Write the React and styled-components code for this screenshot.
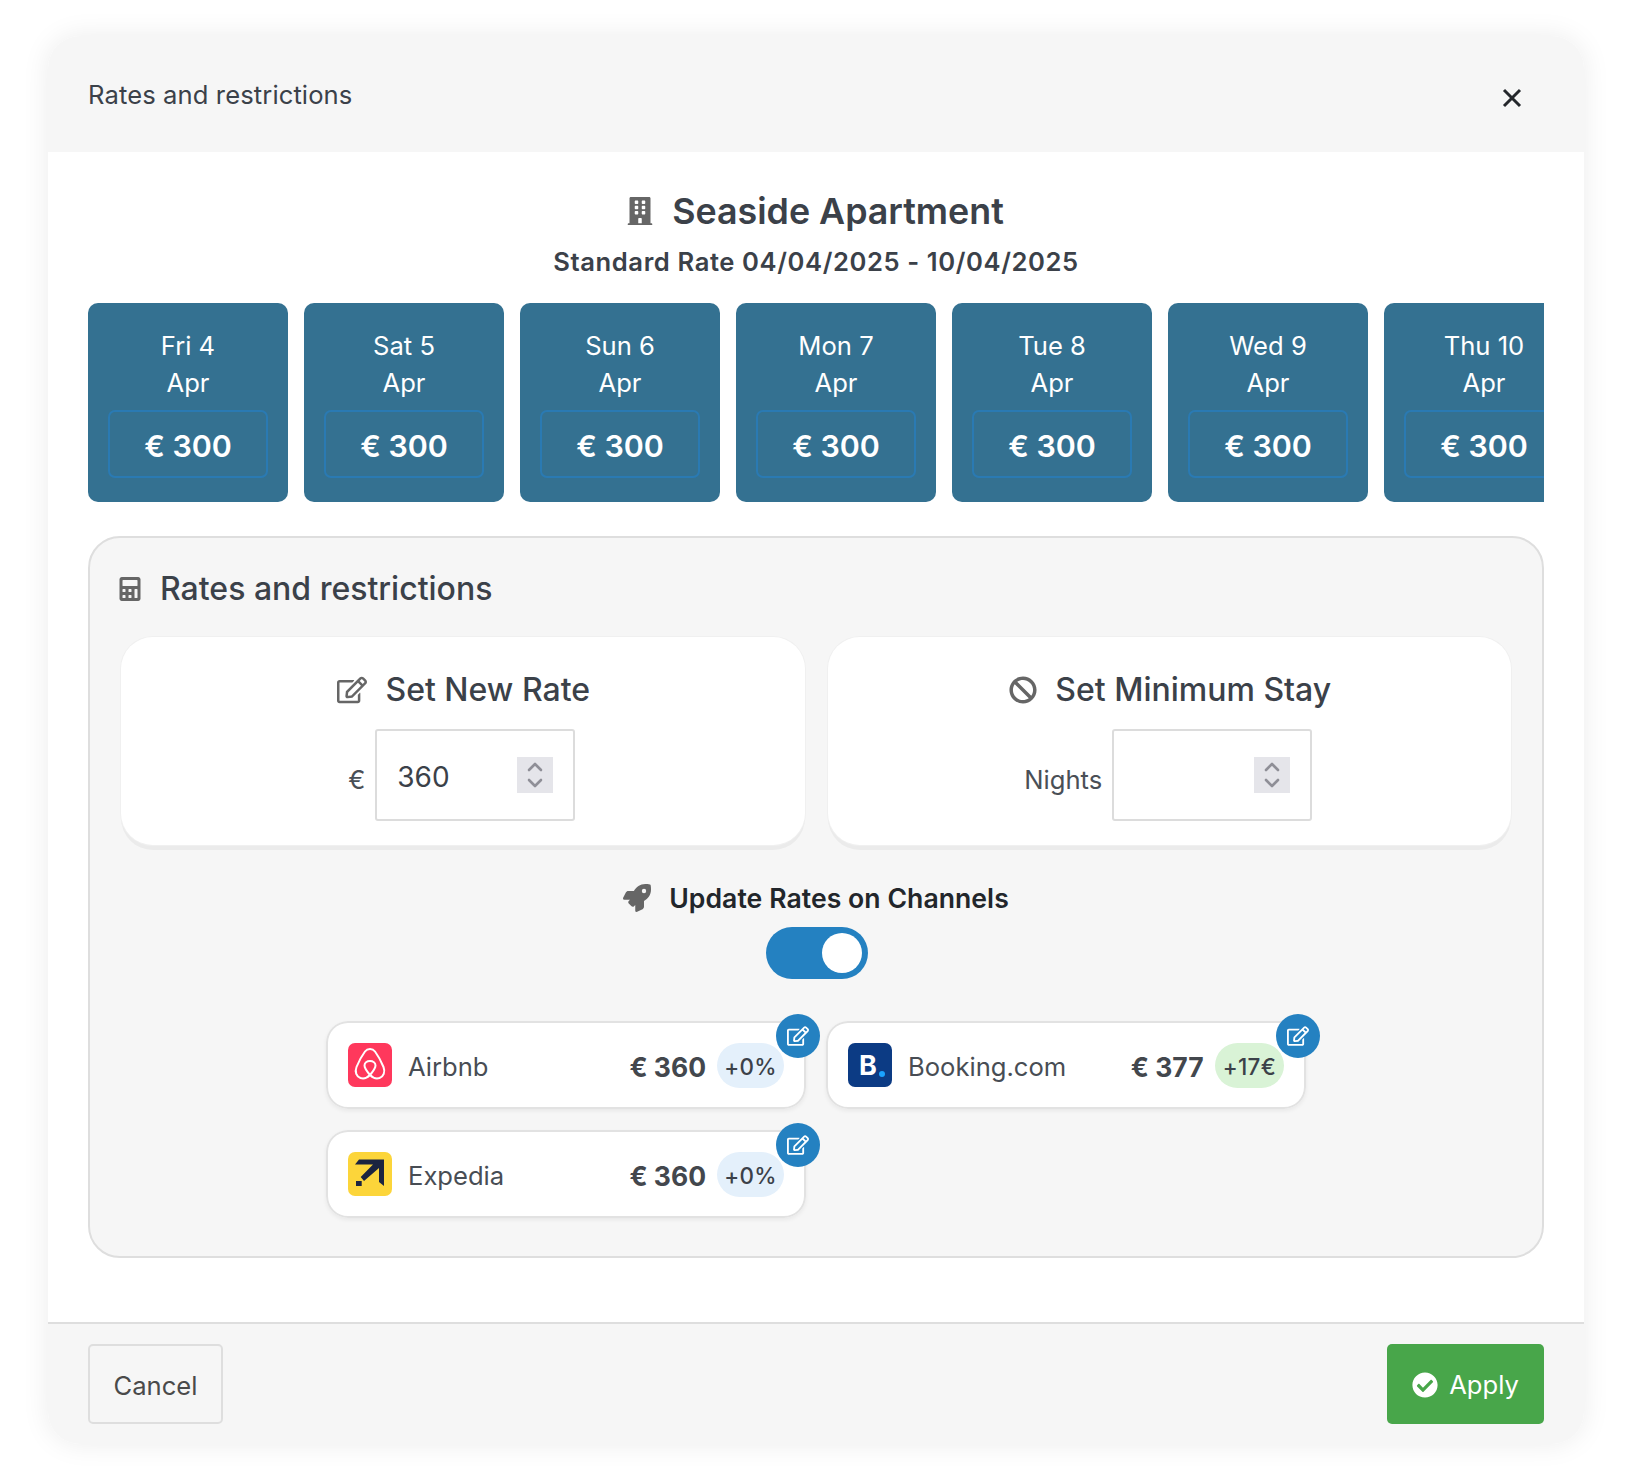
import React from 'react'
import styled, { createGlobalStyle } from 'styled-components'
import { FaBuilding, FaCalculator, FaRegEdit, FaBan, FaRocket, FaCheckCircle } from 'react-icons/fa'

const GlobalStyle = createGlobalStyle`
  * { box-sizing: border-box; }
  body {
    margin: 0;
    background: #fff;
    color: #3b4149;
    font-family: Inter, "Noto Sans", sans-serif;
  }
`

const Page = styled.div`
  width: 1628px;
  height: 1472px;
  padding: 36px 44px 28px 48px;
`

const Modal = styled.div`
  width: 1536px;
  height: 1408px;
  display: flex;
  flex-direction: column;
  background: #fff;
  border-radius: 32px;
  overflow: hidden;
  box-shadow: 0 0 28px rgba(0, 0, 0, 0.08);
`

const Header = styled.div`
  height: 116px;
  flex-shrink: 0;
  display: flex;
  align-items: center;
  justify-content: space-between;
  padding: 0 62px 0 40px;
  background: #f6f6f6;
`

const HeaderTitle = styled.div`
  margin-top: 2px;
  font-size: 25.6px;
  line-height: 1;
  letter-spacing: 0.1px;
`

const CloseButton = styled.div`
  display: flex;
  margin-top: 7px;
  color: #24272b;
`

const Body = styled.div`
  flex: 1;
  padding: 40px 40px 0;
`

const Heading = styled.h1`
  margin: 0;
  height: 38px;
  padding-right: 2px;
  display: flex;
  align-items: center;
  justify-content: center;
  gap: 18px;
  font-size: 35.8px;
  font-weight: 600;
  line-height: 38px;
`

const SubHeading = styled.div`
  margin-top: 17px;
  text-align: center;
  font-size: 25.6px;
  font-weight: 600;
  letter-spacing: 0.6px;
  line-height: 30px;
`

const IconSlot = styled.span`
  display: inline-flex;
  color: #666;
  font-size: ${(p) => p.$size}px;
`

const DayStrip = styled.div`
  margin-top: 26px;
  display: flex;
  gap: 16px;
  overflow: hidden;
`

const DayCard = styled.div`
  flex: 0 0 200px;
  height: 199px;
  padding: 24px 20px 0;
  background: #347191;
  border-radius: 10px;
  color: #fff;
  text-align: center;
  font-size: 25.6px;
  line-height: 37px;
`

const PriceBox = styled.div`
  height: 68px;
  margin-top: 9px;
  padding-top: 4px;
  display: flex;
  align-items: center;
  justify-content: center;
  border: 2px solid #2a7ab3;
  border-radius: 7px;
  font-size: 30.4px;
  font-weight: 600;
`

const Panel = styled.section`
  margin-top: 34px;
  height: 722px;
  padding: 32px 31px 0;
  background: #f6f6f6;
  border: 2px solid #dedede;
  border-radius: 32px;
`

const PanelTitle = styled.h2`
  margin: 0 0 0 -3px;
  display: flex;
  align-items: center;
  gap: 18px;
  font-size: 32px;
  font-weight: 500;
  line-height: 38px;
`

const SetterGrid = styled.div`
  margin-top: 29px;
  display: grid;
  grid-template-columns: 1fr 1fr;
  gap: 23px;
`

const SetterCard = styled.div`
  height: 208px;
  padding: 34px 0 0;
  background: #fff;
  border-radius: 32px;
  box-shadow: 0 0 0 1px #f0f0f0, 0 5px 0 #ebebeb;
`

const SetterTitle = styled.div`
  display: flex;
  align-items: center;
  justify-content: center;
  gap: 18px;
  padding-left: 2px;
  font-size: 32px;
  font-weight: 500;
  line-height: 38px;
`

const FieldRow = styled.div`
  margin-top: 20px;
  padding-right: 2px;
  display: flex;
  justify-content: center;
  align-items: center;
  gap: 10px;
`

const FieldLabel = styled.span`
  margin-top: 9px;
  font-size: 25.6px;
  color: #4a4f56;
`

const FieldBox = styled.div`
  width: 200px;
  height: 92px;
  display: flex;
  align-items: center;
  padding: 0 20px;
  border: 2px solid #dcdcdc;
  border-radius: 3px;
  background: #fff;
`

const FieldInput = styled.input`
  flex: 1;
  min-width: 0;
  padding: 0;
  margin-top: 3px;
  border: 0;
  outline: 0;
  background: none;
  color: #3b4149;
  font: 400 28px Inter, sans-serif;
`

const Spinner = styled.span`
  flex: 0 0 36px;
  height: 36px;
  display: flex;
  align-items: center;
  justify-content: center;
  background: #e5e5ea;
`

const ChannelHeader = styled.div`
  margin-top: 35px;
  height: 36px;
  display: flex;
  align-items: center;
  justify-content: center;
  gap: 18px;
  color: #22262b;
  font-size: 26.6px;
  font-weight: 600;
  letter-spacing: 0.05px;
`

const ToggleRow = styled.div`
  margin-top: 11px;
  padding-left: 2px;
  display: flex;
  justify-content: center;
`

const Toggle = styled.div`
  width: 102px;
  height: 52px;
  padding: 6px;
  display: flex;
  justify-content: flex-end;
  background: #2481c1;
  border-radius: 26px;
`

const Knob = styled.div`
  width: 40px;
  height: 40px;
  background: #fff;
  border-radius: 50%;
`

const ChannelGrid = styled.div`
  margin: 42px auto 0;
  width: 980px;
  display: grid;
  grid-template-columns: 480px 480px;
  column-gap: 20px;
  row-gap: 21px;
`

const ChannelCard = styled.div`
  position: relative;
  height: 88px;
  padding: 0 22px;
  display: flex;
  align-items: center;
  background: #fff;
  border-radius: 22px;
  box-shadow: inset 0 0 0 2px #e2e2e2, 0 2px 4px rgba(0, 0, 0, 0.06);
`

const LogoTile = styled.div`
  flex: 0 0 44px;
  height: 44px;
  display: flex;
  align-items: center;
  justify-content: center;
  border-radius: 7px;
  background: ${(p) => p.$bg};
  color: #fff;
`

const BookingMark = styled.span`
  display: flex;
  align-items: flex-end;
  gap: 2px;
  margin-left: 4px;
  font-size: 27px;
  font-weight: 700;
  line-height: 1;
`

const BookingDot = styled.span`
  width: 6px;
  height: 6px;
  margin-bottom: 2px;
  border-radius: 50%;
  background: #1aa3ff;
`

const ChannelName = styled.div`
  flex: 1;
  margin: 3px 0 0 16px;
  font-size: 25.6px;
  color: #484d54;
`

const ChannelPrice = styled.div`
  margin-top: 3px;
  font-size: 26.5px;
  font-weight: 700;
  color: #43474d;
`

const Delta = styled.div`
  min-width: 67px;
  height: 45px;
  margin-left: 11px;
  padding: 3px ${(p) => (p.$up ? 8 : 6)}px 0;
  display: flex;
  align-items: center;
  justify-content: center;
  border-radius: 23px;
  font-size: 22.4px;
  font-weight: 500;
  letter-spacing: 0.3px;
  color: #3b4149;
  background: ${(p) => (p.$up ? '#d9f3d6' : '#e4f0fb')};
`

const EditBadge = styled.div`
  position: absolute;
  top: -7px;
  right: -14px;
  width: 44px;
  height: 44px;
  display: flex;
  align-items: center;
  justify-content: center;
  background: #2481c1;
  border-radius: 50%;
  color: #fff;
  font-size: 22px;
`

const Footer = styled.div`
  height: 122px;
  flex-shrink: 0;
  display: flex;
  align-items: center;
  justify-content: space-between;
  padding: 0 40px;
  background: #f6f6f6;
  border-top: 2px solid #dedede;
`

const CancelButton = styled.button`
  width: 135px;
  height: 80px;
  padding-top: 4px;
  background: none;
  border: 2px solid #dedede;
  border-radius: 5px;
  color: #4a4a4a;
  font: 400 25.6px Inter, sans-serif;
`

const ApplyButton = styled.button`
  width: 157px;
  height: 80px;
  padding-top: 2px;
  display: flex;
  align-items: center;
  justify-content: center;
  gap: 11px;
  background: #48a64a;
  border: 0;
  border-radius: 5px;
  color: #fff;
  font: 400 25.6px Inter, sans-serif;
`

const days = ['Fri 4', 'Sat 5', 'Sun 6', 'Mon 7', 'Tue 8', 'Wed 9', 'Thu 10']

const SpinArrows = () => (
  <svg width="20" height="30" viewBox="0 0 20 30" fill="none" stroke="#8f8f97" strokeWidth="2.6" strokeLinecap="round" strokeLinejoin="round">
    <path d="M4 10l6-6 6 6" />
    <path d="M4 20l6 6 6-6" />
  </svg>
)

const CloseIcon = () => (
  <svg width="20" height="20" viewBox="0 0 20 20" stroke="currentColor" strokeWidth="3">
    <path d="M2 2l16 16M18 2L2 18" />
  </svg>
)

const AirbnbLogo = () => (
  <svg width="44" height="44" viewBox="0 0 44 44" fill="none" stroke="#fff" strokeWidth="2" strokeLinejoin="round">
    <path d="M22 32c-3 3-6.500 4-9.500 3-4-1.500-6-6-4-11 2.500-6 5.500-11.500 8.500-15.500C18.500 6.500 20 6 22 6s3.500.5 5 2.500c3 4 6 9.500 8.500 15.500 2 5 0 9.500-4 11-3 1-6.500 0-9.500-3z" />
    <path d="M22 32c-3-3.500-5.500-6.500-5.500-9.500 0-2.800 2.400-4.500 5.500-4.500s5.500 1.700 5.500 4.500c0 3-2.500 6-5.500 9.500z" />
  </svg>
)

const ExpediaArrow = () => (
  <svg width="44" height="44" viewBox="0 0 44 44" fill="#1b2440">
    <path d="M7 12.500L11 7.500H36V34L31 30V16L16 29L12.700 25L25 12.500z" />
    <rect x="8" y="29" width="5.700" height="5" />
  </svg>
)

const channels = [
  { name: 'Airbnb', price: 360, delta: '+0%', bg: '#ff385c', logo: <AirbnbLogo /> },
  { name: 'Booking.com', price: 377, delta: '+17€', up: true, bg: '#0c3b84', logo: <BookingMark>B<BookingDot /></BookingMark> },
  { name: 'Expedia', price: 360, delta: '+0%', bg: '#fcd53a', logo: <ExpediaArrow /> },
]

function RateField({ label, value }) {
  return (
    <FieldRow>
      <FieldLabel>{label}</FieldLabel>
      <FieldBox>
        <FieldInput defaultValue={value} />
        <Spinner><SpinArrows /></Spinner>
      </FieldBox>
    </FieldRow>
  )
}

export default function App() {
  return (
    <Page>
      <GlobalStyle />
      <Modal>
        <Header>
          <HeaderTitle>Rates and restrictions</HeaderTitle>
          <CloseButton><CloseIcon /></CloseButton>
        </Header>

        <Body>
          <Heading>
            <IconSlot $size={28}><FaBuilding /></IconSlot>
            Seaside Apartment
          </Heading>
          <SubHeading>Standard Rate 04/04/2025 - 10/04/2025</SubHeading>

          <DayStrip>
            {days.map((day) => (
              <DayCard key={day}>
                {day}
                <br />
                Apr
                <PriceBox>€ 300</PriceBox>
              </DayCard>
            ))}
          </DayStrip>

          <Panel>
            <PanelTitle>
              <IconSlot $size={24}><FaCalculator /></IconSlot>
              Rates and restrictions
            </PanelTitle>

            <SetterGrid>
              <SetterCard>
                <SetterTitle>
                  <IconSlot $size={30}><FaRegEdit /></IconSlot>
                  Set New Rate
                </SetterTitle>
                <RateField label="€" value="360" />
              </SetterCard>
              <SetterCard>
                <SetterTitle>
                  <IconSlot $size={28}><FaBan /></IconSlot>
                  Set Minimum Stay
                </SetterTitle>
                <RateField label="Nights" value="" />
              </SetterCard>
            </SetterGrid>

            <ChannelHeader>
              <IconSlot $size={28}><FaRocket /></IconSlot>
              Update Rates on Channels
            </ChannelHeader>
            <ToggleRow>
              <Toggle><Knob /></Toggle>
            </ToggleRow>

            <ChannelGrid>
              {channels.map((c) => (
                <ChannelCard key={c.name}>
                  <LogoTile $bg={c.bg}>{c.logo}</LogoTile>
                  <ChannelName>{c.name}</ChannelName>
                  <ChannelPrice>€ {c.price}</ChannelPrice>
                  <Delta $up={c.up}>{c.delta}</Delta>
                  <EditBadge><FaRegEdit /></EditBadge>
                </ChannelCard>
              ))}
            </ChannelGrid>
          </Panel>
        </Body>

        <Footer>
          <CancelButton>Cancel</CancelButton>
          <ApplyButton>
            <FaCheckCircle size={26} />
            Apply
          </ApplyButton>
        </Footer>
      </Modal>
    </Page>
  )
}
